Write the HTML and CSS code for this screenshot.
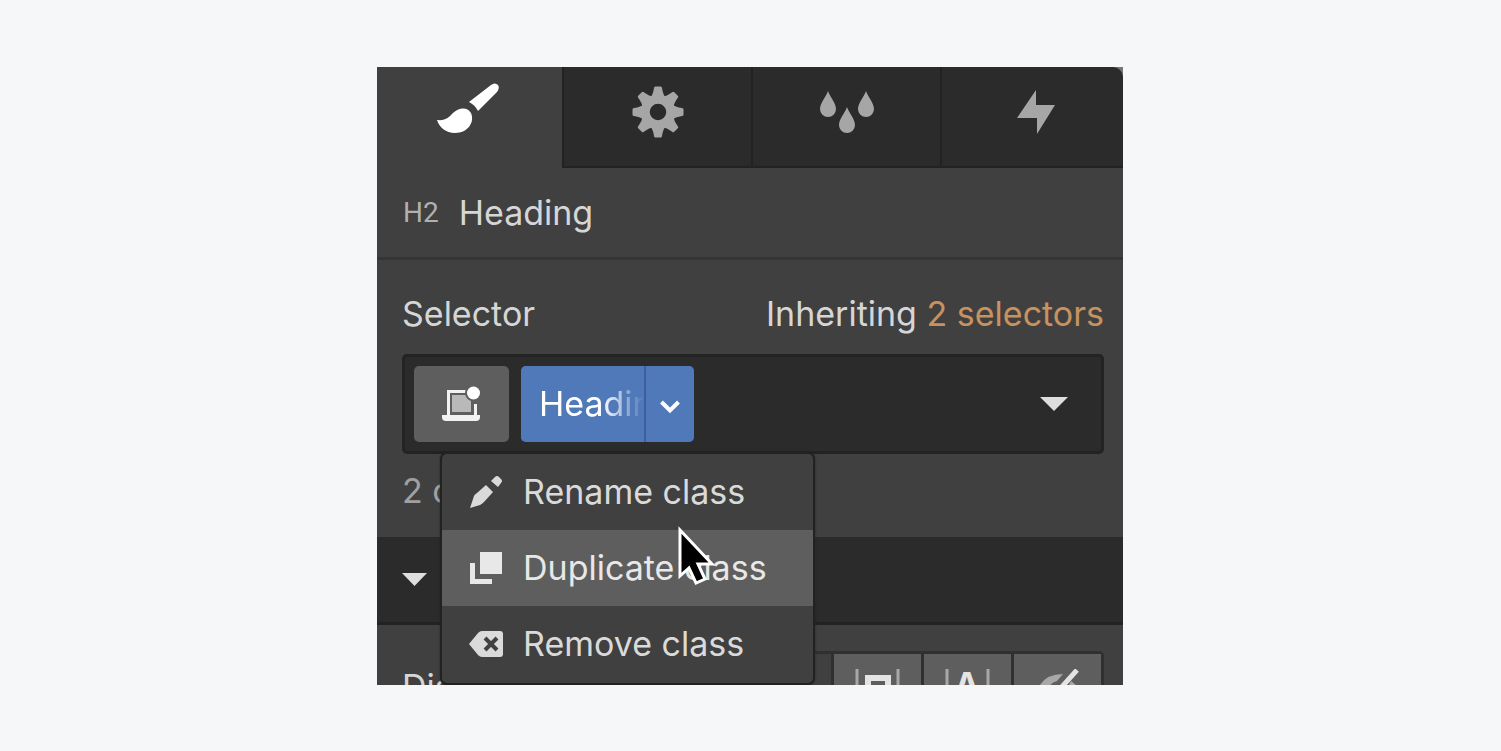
FILE: index.html
```html
<!DOCTYPE html>
<html lang="en">
<head>
    <meta charset="UTF-8">
    <meta name="viewport" content="width=device-width, initial-scale=1.0">
    <title>Style panel</title>
    <link rel="stylesheet" href="styles.css">
</head>
<body>

<main class="panel">
    <nav class="tabs">
        <button type="button" class="tab tab-active" aria-label="Style">
            <svg width="62" height="50" viewBox="0 0 62 50" fill="currentColor">
                <path d="M32 19 L54 2 Q58 -1 61 2 Q63 5 60 9 L41 28 Q38 22 32 19Z"/>
                <path d="M0 37 C9 38 12 34 16 30 C21 25 30 23 34 30 C38 39 31 50 18 50 C9 50 2 44 0 37Z"/>
            </svg>
        </button>
        <button type="button" class="tab" aria-label="Settings">
            <svg width="52" height="52" viewBox="-26 -26 52 52" fill="currentColor">
                <defs>
                    <path id="tooth" d="M-8 -14 Q-5 -17 -4 -24 Q-4 -25.500 -2.500 -25.500 H2.500 Q4 -25.500 4 -24 Q5 -17 8 -14Z"/>
                </defs>
                <circle r="12.500" fill="none" stroke="currentColor" stroke-width="8.500"/>
                <use href="#tooth"/>
                <use href="#tooth" transform="rotate(45)"/>
                <use href="#tooth" transform="rotate(90)"/>
                <use href="#tooth" transform="rotate(135)"/>
                <use href="#tooth" transform="rotate(180)"/>
                <use href="#tooth" transform="rotate(225)"/>
                <use href="#tooth" transform="rotate(270)"/>
                <use href="#tooth" transform="rotate(315)"/>
            </svg>
        </button>
        <button type="button" class="tab" aria-label="Style manager">
            <svg width="54" height="42" viewBox="0 0 54 42" fill="currentColor">
                <path d="M8 0 C10 6 16 12 16 18 A8 8 0 0 1 0 18 C0 12 6 6 8 0Z"/>
                <path d="M46 0 C48 6 54 12 54 18 A8 8 0 0 1 38 18 C38 12 44 6 46 0Z"/>
                <path d="M27 16 C29 22 35 28 35 34 A8 8 0 0 1 19 34 C19 28 25 22 27 16Z"/>
            </svg>
        </button>
        <button type="button" class="tab tab-last" aria-label="Interactions">
            <svg width="38" height="44" viewBox="0 0 38 44" fill="currentColor">
                <path d="M19 0 V15 H38 L20 44 V28 H0Z"/>
            </svg>
        </button>
    </nav>

    <header class="element">
        <span class="element-tag">H2</span>
        <span>Heading</span>
    </header>

    <section class="selector">
        <div class="selector-labels">
            <span>Selector</span>
            <span>Inheriting <a href="#" class="inherit-link">2 selectors</a></span>
        </div>

        <div class="selector-box">
            <button type="button" class="device" aria-label="Breakpoint">
                <svg width="39" height="36" viewBox="0 0 39 36">
                    <rect x="10" y="9" width="19" height="17" fill="#b9b9b9"/>
                    <path d="M6.500 29 V5.500 H25 M33.500 18 V29" fill="none" stroke="#f2f2f2" stroke-width="3"/>
                    <path d="M0 29 H38 V31 Q38 35 34 35 H4 Q0 35 0 31Z" fill="#f2f2f2"/>
                    <circle cx="31.500" cy="7" r="8.500" fill="#5e5e5e"/>
                    <circle cx="31.500" cy="7" r="6.500" fill="#fff"/>
                </svg>
            </button>
            <div class="chip">
                <button type="button" class="chip-name"><span class="chip-text">Heading</span></button>
                <button type="button" class="chip-more" aria-label="Class options">
                    <svg width="22" height="15" viewBox="0 0 22 15">
                        <path d="M2.500 3 L11 11.500 L19.500 3" fill="none" stroke="#fff" stroke-width="4"/>
                    </svg>
                </button>
            </div>
            <button type="button" class="open-list" aria-label="Show selectors">
                <svg width="28" height="14" viewBox="0 0 28 14"><path d="M0 0 H28 L14 14Z" fill="#dedede"/></svg>
            </button>

            <div class="menu">
                <button type="button" class="menu-item">
                    <svg class="menu-icon" width="34" height="34" viewBox="-1 -1 34 34" fill="currentColor">
                        <path d="M0 32 L4 20 Q5 18 7 17 L16 9 L23 16 L14 26 Q12 28 10 29Z"/>
                        <path d="M21 5 L25 1 Q27 -1 29 1 L31 3 Q33 5 31 7 L28 11Z"/>
                    </svg>
                    Rename class
                </button>
                <button type="button" class="menu-item menu-item-hover">
                    <svg class="menu-icon" width="34" height="34" viewBox="-1 -1 34 34" fill="currentColor">
                        <path d="M10 0 H32 V22 H10Z"/>
                        <path d="M0 11 H5 V27 H22 V32 H0Z"/>
                    </svg>
                    Duplicate class
                    <svg class="cursor" width="36" height="60" viewBox="0 0 36 60">
                        <path d="M2 4 V50 L11 42 L18 57 L27 53 L20 38 H34Z" fill="#000" stroke="#fff" stroke-width="3"/>
                    </svg>
                </button>
                <button type="button" class="menu-item">
                    <svg class="menu-icon" width="34" height="26" viewBox="0 0 34 26">
                        <path d="M0 13 L9 2 Q11 0 13 0 H31 Q34 0 34 3 V23 Q34 26 31 26 H13 Q11 26 9 24Z" fill="currentColor"/>
                        <path d="M16 7 L28 19 M28 7 L16 19" stroke="#404040" stroke-width="4"/>
                    </svg>
                    Remove class
                </button>
            </div>
        </div>

        <div class="usage">2 on this page</div>
    </section>

    <button type="button" class="section-bar" aria-label="Layout">
        <svg width="25" height="13" viewBox="0 0 25 13"><path d="M0 0 H25 L12.500 13Z" fill="#dedede"/></svg>
    </button>

    <section class="display">
        <span class="display-label">Display</span>
        <div class="segments">
            <button type="button" class="segment segment-plain" aria-label="Block"></button>
            <button type="button" class="segment segment-plain" aria-label="Flex"></button>
            <button type="button" class="segment segment-plain" aria-label="Grid"></button>
            <button type="button" class="segment" aria-label="Inline block">
                <svg width="46" height="36" viewBox="0 0 46 36" fill="none">
                    <path d="M2 0 V36 M43 0 V36" stroke="#a8a8a8" stroke-width="3"/>
                    <path d="M13 9 H33 V29 H13Z" stroke="#e4e4e4" stroke-width="6"/>
                </svg>
            </button>
            <button type="button" class="segment" aria-label="Inline">
                <svg width="46" height="36" viewBox="0 0 46 36" fill="none">
                    <path d="M2 0 V36 M43 0 V36" stroke="#a8a8a8" stroke-width="3"/>
                    <text class="inline-glyph" x="22" y="28" text-anchor="middle">A</text>
                </svg>
            </button>
            <button type="button" class="segment" aria-label="None">
                <svg width="46" height="36" viewBox="0 0 46 36" fill="none">
                    <path d="M2 22 Q8 5 28 5 L22 12 Q14 14 13 22 Q15 27 18 28 L14 33 Q6 29 2 22Z M36 12 Q42 16 45 22 Q38 33 25 34Z" fill="#a8a8a8"/>
                    <path d="M42 1 L16 30" stroke="#e4e4e4" stroke-width="5"/>
                </svg>
            </button>
        </div>
    </section>
</main>

</body>
</html>
```
FILE: styles.css
```css
* {
    box-sizing: border-box;
}

body {
    display: flex;
    justify-content: center;
    height: 100vh;
    margin: 0;
    padding: 67px 25px 66px 24px;
    background-color: #f5f7f9;
    color: #d6d6d6;
    font-family: Inter, sans-serif;
    font-size: 34px;
    line-height: 44px;
}

button {
    margin: 0;
    padding: 0;
    border: none;
    background: none;
    color: inherit;
    font: inherit;
    cursor: pointer;
}

svg {
    display: block;
    flex-shrink: 0;
}

.panel {
    width: 100%;
    max-width: 746px;
    overflow: hidden;
    background-color: #777;
}

/* Tabs */
.tabs {
    display: grid;
    grid-template-columns: 185fr 189fr 189fr 183fr;
    height: 101px;
    overflow: hidden;
    border-top-right-radius: 10px;
}

.tab {
    display: flex;
    align-items: center;
    justify-content: center;
    padding-bottom: 9px;
    border-left: 2px solid #222;
    border-bottom: 2px solid #222;
    background-color: #2b2b2b;
    color: #a6a6a6;
}

.tab-active {
    padding-right: 4px;
    padding-bottom: 20px;
    border: none;
    background-color: #404040;
    color: #fff;
}

.tab-last {
    padding-left: 6px;
}

/* Selected element */
.element {
    display: flex;
    align-items: center;
    gap: 20px;
    height: 92px;
    padding: 0 26px;
    border-bottom: 3px solid #353535;
    background-color: #404040;
}

.element-tag {
    color: #b0b0b0;
    font-family: Roboto, sans-serif;
    font-size: 28px;
}

/* Selector */
.selector {
    padding: 32px 19px 24px 25px;
    background-color: #404040;
}

.selector-labels {
    display: flex;
    justify-content: space-between;
    margin-bottom: 18px;
}

.inherit-link {
    color: #c8925f;
    text-decoration: none;
}

.selector-box {
    position: relative;
    display: flex;
    align-items: center;
    gap: 12px;
    height: 100px;
    padding: 9px;
    border: 3px solid #232323;
    border-radius: 5px;
    background-color: #2b2b2b;
}

.device {
    display: flex;
    align-items: center;
    justify-content: center;
    width: 95px;
    height: 76px;
    border-radius: 5px;
    background-color: #5e5e5e;
}

.chip {
    display: flex;
    gap: 2px;
    height: 76px;
    overflow: hidden;
    border-radius: 5px;
    background-color: #3d5f9b;
}

.chip-name {
    width: 123px;
    padding-left: 18px;
    background-color: #5079ba;
    color: #fff;
    text-align: left;
}

.chip-text {
    display: block;
    overflow: hidden;
    -webkit-mask-image: linear-gradient(to right, #000 60%, transparent);
    mask-image: linear-gradient(to right, #000 60%, transparent);
}

.chip-more {
    display: flex;
    align-items: center;
    justify-content: center;
    width: 48px;
    padding-top: 4px;
    background-color: #5079ba;
}

.open-list {
    margin-left: auto;
    padding: 12px 24px;
}

.usage {
    margin-top: 15px;
    color: #a0a0a0;
}

/* Class menu */
.menu {
    position: absolute;
    top: 95px;
    left: 35px;
    z-index: 1;
    width: 375px;
    padding-bottom: 1px;
    border: 2px solid #222;
    border-radius: 7px;
    background-color: #404040;
    box-shadow: 0 0 2px #222;
}

.menu-item {
    position: relative;
    display: flex;
    align-items: center;
    gap: 20px;
    width: 100%;
    height: 76px;
    padding-left: 27px;
    color: #dadada;
    white-space: nowrap;
}

.menu-item-hover {
    background-color: #5e5e5e;
    color: #e8e8e8;
}

.cursor {
    position: absolute;
    top: -4px;
    left: 236px;
}

/* Layout section */
.section-bar {
    display: flex;
    align-items: center;
    width: 100%;
    height: 88px;
    padding-left: 25px;
    border-bottom: 3px solid #222;
    background-color: #2b2b2b;
}

.display {
    display: flex;
    align-items: center;
    justify-content: space-between;
    padding: 26px 19px 26px 25px;
    background-color: #404040;
}

.segments {
    display: flex;
    gap: 3px;
    padding: 3px;
    border-radius: 5px;
    background-color: #303030;
}

.segment {
    display: flex;
    align-items: center;
    justify-content: center;
    width: 87px;
    height: 66px;
    background-color: #5e5e5e;
}

.segment-plain {
    background-color: #404040;
}

.inline-glyph {
    fill: #e4e4e4;
    font-size: 34px;
    font-weight: 700;
}
```
